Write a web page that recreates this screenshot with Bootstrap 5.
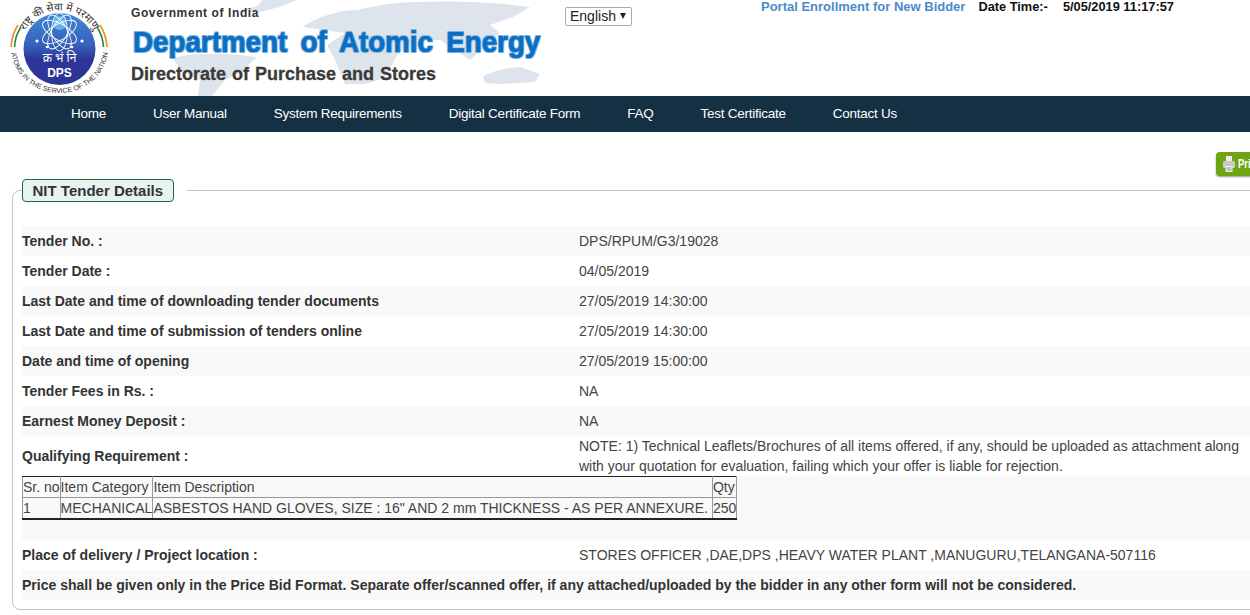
<!DOCTYPE html>
<html lang="en">
<head>
    <meta charset="UTF-8">
    <meta name="viewport" content="width=device-width, initial-scale=1.0">
    <title>NIT Tender Details</title>

    <!-- Bootstrap CSS -->
    <link href="https://cdn.jsdelivr.net/npm/bootstrap@5.3.0/dist/css/bootstrap.min.css" rel="stylesheet">

    <style>
        html, body { overflow-x: hidden; }
        body {
            font-family: "Liberation Sans", Arial, sans-serif;
            font-size: 14px;
            color: #333;
            width: 1250px;
            height: 615px;
            overflow: hidden;
        }
        .site-head { height: 96px; position: relative; background: #fff; }
        .world-map { position: absolute; left: 0; top: 0; width: 560px; height: 96px; }
        .head-logo { width: 120px; height: 96px; flex: none; position: relative; }
        .head-titles { margin-left: 11px; width: 430px; position: relative; }
        .gov-line { font-size: 12px; font-weight: 700; color: #333; margin-top: 6px; line-height: 14px; letter-spacing: .6px; }
        .dept-line {
            font-size: 30px; font-weight: 700; line-height: 34px; color: #0a6fc2; margin: 5px 0 0 2px; white-space: nowrap;
            word-spacing: 6px;
            transform: scaleX(.925); transform-origin: left center;
            -webkit-text-stroke: .7px #0a6fc2;
            text-shadow: 1px 0 #9cc6ea, -1px 0 #9cc6ea, 0 1px #9cc6ea, 0 -1px #9cc6ea, 1px 1px #9cc6ea, -1px -1px #9cc6ea, 1px -1px #9cc6ea, -1px 1px #9cc6ea;
        }
        .dir-line { font-size: 18px; font-weight: 700; color: #3a3a3a; line-height: 20px; margin-top: 5px; word-spacing: 1px; white-space: nowrap; -webkit-text-stroke: .3px #3a3a3a; }
        .lang-pick { position: relative; margin: 7px 0 0 4px; flex: none; width: 67px; height: 19px; border: 1px solid #aaa; border-radius: 2px; background: #fff; color: #222; line-height: 17px; padding-left: 4px; }
        .lang-pick i { position: absolute; right: 5px; top: 5px; border-left: 3px solid transparent; border-right: 3px solid transparent; border-top: 6px solid #222; }
        .head-links { position: absolute; top: 0; left: 761px; white-space: nowrap; font-weight: 700; font-size: 12.8px; line-height: 14px; color: #111; }
        .head-links a { color: #4a8ccb; text-decoration: none; font-size: 13px; margin-right: 13px; }
        .head-links .stamp { margin-left: 15px; }
        .main-nav { height: 36px; background: #152f43; padding: 0 0 0 47.5px; }
        .main-nav .nav-link { color: #fff; font-size: 13.5px; padding: 0 23.5px; line-height: 35px; letter-spacing: -.25px; }
        .print-wrap { height: 58px; position: relative; }
        .print-btn { position: absolute; left: 1216px; top: 20px; width: 60px; height: 24px; background: #6fa512; border-radius: 4px; color: #fff; font-weight: 700; font-size: 13px; line-height: 24px; padding-left: 6px; box-shadow: 0 1px 2px #999; white-space: nowrap; display: flex; align-items: center; gap: 2px; }
        .print-btn span { display: inline-block; transform: scaleX(.72); transform-origin: left center; }
        .tender-box { border: 1px solid #c4c4c4; border-radius: 8px; margin: -11px -40px 0 12px; padding: 0 0 9px 9px; min-width: 0; height: 431px; }
        .tender-title { float: none; width: auto; margin: 0; padding: 0 13px 0 0; font-size: 15px; line-height: 1; }
        .tender-title span { display: inline-block; height: 23px; line-height: 21px; padding: 0 9.5px; font-weight: 700; color: #333; background: #e8f2f0; border: 1px solid #1f6b3a; border-radius: 4px; vertical-align: top; }
        .tender-rows { margin-top: 24px; width: 1228px; }
        .t-row { display: flex; min-height: 30px; align-items: center; }
        .t-row.alt { background: #f9f9f9; }
        .t-label { width: 557px; flex: none; font-weight: 700; color: #333; }
        .t-value { width: 662px; color: #444; line-height: 20px; }
        .t-note { height: 40px; }
        .t-items { height: 64px; display: block; }
        .items-tbl { border-collapse: collapse; border: 1px solid #222; border-bottom-width: 2px; color: #444; line-height: 20px; }
        .items-tbl td { border: 1px solid #999; padding: 0; white-space: nowrap; }
        .items-tbl td.item-desc { padding-right: 4px; }
        .items-tbl tr:first-child td { border-top-color: #222; }
    </style>
</head>
<body>
    <div class="site-head d-flex">
        <!-- mapa de fondo -->
        <svg class="world-map" viewBox="0 0 560 96" aria-hidden="true">
            <g fill="#dee4ec">
                <path d="M240 10 L258 6 L262 0 L297 0 L280 7 L255 13 Z"/>
                <path d="M173 58 Q200 50 257 57 L240 73 L225 80 L212 96 L198 96 L200 80 L180 70 Z"/>
                <path d="M302 27 Q330 10 357 10 Q390 2 417 2 Q480 0 530 7 L513 17 L490 25 L500 33 L470 60 L440 40 L415 40 L397 55 L385 78 L365 84 L345 84 L335 60 L327 45 L345 33 Z"/>
                <path d="M483 76 Q500 68 520 67 L540 74 L535 82 L500 84 L485 83 Z"/>
            </g>
        </svg>

        <!-- logo DPS -->
        <svg class="head-logo" viewBox="0 0 120 96">
            <defs>
                <linearGradient id="discFill" x1="0" y1="0" x2="0" y2="1">
                    <stop offset="0" stop-color="#3f8ad8"/>
                    <stop offset=".45" stop-color="#3560bb"/>
                    <stop offset=".65" stop-color="#2d3596"/>
                    <stop offset="1" stop-color="#2d3596"/>
                </linearGradient>
                <path id="arcTop" d="M22 60 A39 39 0 1 1 97 60"/>
                <path id="arcBottom" d="M11 48 A48.5 45 0 0 0 108 48"/>
            </defs>
            <circle cx="59.5" cy="49" r="36" fill="url(#discFill)"/>
            <circle cx="59.5" cy="23" r="7" fill="#5fb4ea"/>
            <g fill="none" stroke="#fff" stroke-width=".9">
                <ellipse cx="59.5" cy="32" rx="8" ry="19"/>
                <ellipse cx="59.5" cy="32" rx="8" ry="19" transform="rotate(60 59.5 32)"/>
                <ellipse cx="59.5" cy="32" rx="8" ry="19" transform="rotate(-60 59.5 32)"/>
                <ellipse cx="59.5" cy="32" rx="8" ry="19" transform="rotate(30 59.5 32)"/>
                <ellipse cx="59.5" cy="32" rx="8" ry="19" transform="rotate(-30 59.5 32)"/>
            </g>
            <g fill="#fff"><circle cx="37" cy="41" r="1.6"/><circle cx="82" cy="41" r="1.6"/><circle cx="47" cy="47" r="1.3"/><circle cx="72" cy="47" r="1.3"/></g>
            <text x="59.5" y="62" text-anchor="middle" fill="#fff" font-size="12" font-family="'Noto Sans','DejaVu Sans',sans-serif">क्र भं नि</text>
            <text x="59.5" y="77" text-anchor="middle" fill="#fff" font-size="12" font-weight="700" font-family="'Liberation Sans',sans-serif">DPS</text>
            <text font-size="10.5" fill="#333" font-family="'Noto Sans','DejaVu Sans',sans-serif"><textPath href="#arcTop" startOffset="50%" text-anchor="middle">राष्ट्र की सेवा में परमाणु</textPath></text>
            <text font-size="7" fill="#333" font-family="'Liberation Sans',sans-serif"><textPath href="#arcBottom" startOffset="50%" text-anchor="middle">ATOMS IN THE SERVICE OF THE NATION</textPath></text>
            <path d="M11 47 Q12 34 18 25" fill="none" stroke="#f08a24" stroke-width="1.6"/>
            <path d="M14.500 47 Q15 36 21 27" fill="none" stroke="#1f8a3a" stroke-width="1.6"/>
            <path d="M107 47 Q106 34 100 25" fill="none" stroke="#f08a24" stroke-width="1.6"/>
            <path d="M103.500 47 Q103 36 97 27" fill="none" stroke="#1f8a3a" stroke-width="1.6"/>
        </svg>

        <div class="head-titles">
            <div class="gov-line">Government of India</div>
            <div class="dept-line">Department of Atomic Energy</div>
            <div class="dir-line">Directorate of Purchase and Stores</div>
        </div>

        <div class="lang-pick">English<i></i></div>

        <div class="head-links">
            <a href="#">Portal Enrollment for New Bidder</a>Date Time:-<span class="stamp">5/05/2019 11:17:57</span>
        </div>
    </div>

    <ul class="nav main-nav">
        <li class="nav-item"><a class="nav-link" href="#">Home</a></li>
        <li class="nav-item"><a class="nav-link" href="#">User Manual</a></li>
        <li class="nav-item"><a class="nav-link" href="#">System Requirements</a></li>
        <li class="nav-item"><a class="nav-link" href="#">Digital Certificate Form</a></li>
        <li class="nav-item"><a class="nav-link" href="#">FAQ</a></li>
        <li class="nav-item"><a class="nav-link" href="#">Test Certificate</a></li>
        <li class="nav-item"><a class="nav-link" href="#">Contact Us</a></li>
    </ul>

    <div class="print-wrap">
        <div class="print-btn">
            <svg width="14" height="18" viewBox="0 0 14 18"><rect x="4" y="1" width="6" height="5" fill="#eee"/><rect x="1" y="6" width="12" height="7" rx="1.500" fill="#c9ccc6"/><rect x="3.500" y="11" width="7" height="6" fill="#f1f1f1"/><path d="M4.500 13h5M4.500 15h5" stroke="#777" stroke-width=".8"/></svg>
            <span>Print</span>
        </div>
    </div>

    <fieldset class="tender-box">
        <legend class="tender-title"><span>NIT Tender Details</span></legend>
        <div class="tender-rows">
            <div class="t-row alt"><div class="t-label">Tender No. :</div><div class="t-value">DPS/RPUM/G3/19028</div></div>
            <div class="t-row"><div class="t-label">Tender Date :</div><div class="t-value">04/05/2019</div></div>
            <div class="t-row alt"><div class="t-label">Last Date and time of downloading tender documents</div><div class="t-value">27/05/2019 14:30:00</div></div>
            <div class="t-row"><div class="t-label">Last Date and time of submission of tenders online</div><div class="t-value">27/05/2019 14:30:00</div></div>
            <div class="t-row alt"><div class="t-label">Date and time of opening</div><div class="t-value">27/05/2019 15:00:00</div></div>
            <div class="t-row"><div class="t-label">Tender Fees in Rs. :</div><div class="t-value">NA</div></div>
            <div class="t-row alt"><div class="t-label">Earnest Money Deposit :</div><div class="t-value">NA</div></div>
            <div class="t-row t-note"><div class="t-label">Qualifying Requirement :</div><div class="t-value">NOTE: 1) Technical Leaflets/Brochures of all items offered, if any, should be uploaded as attachment along with your quotation for evaluation, failing which your offer is liable for rejection.</div></div>
            <div class="t-row alt t-items">
                <table class="items-tbl">
                    <tr><td>Sr. no</td><td>Item Category</td><td class="item-desc">Item Description</td><td>Qty</td></tr>
                    <tr><td>1</td><td>MECHANICAL</td><td class="item-desc">ASBESTOS HAND GLOVES, SIZE : 16" AND 2 mm THICKNESS - AS PER ANNEXURE.</td><td>250</td></tr>
                </table>
            </div>
            <div class="t-row"><div class="t-label">Place of delivery / Project location :</div><div class="t-value">STORES OFFICER ,DAE,DPS ,HEAVY WATER PLANT ,MANUGURU,TELANGANA-507116</div></div>
            <div class="t-row alt"><div class="t-label w-100">Price shall be given only in the Price Bid Format. Separate offer/scanned offer, if any attached/uploaded by the bidder in any other form will not be considered.</div></div>
        </div>
    </fieldset>

    <script src="https://cdn.jsdelivr.net/npm/bootstrap@5.3.0/dist/js/bootstrap.bundle.min.js"></script>
</body>
</html>
